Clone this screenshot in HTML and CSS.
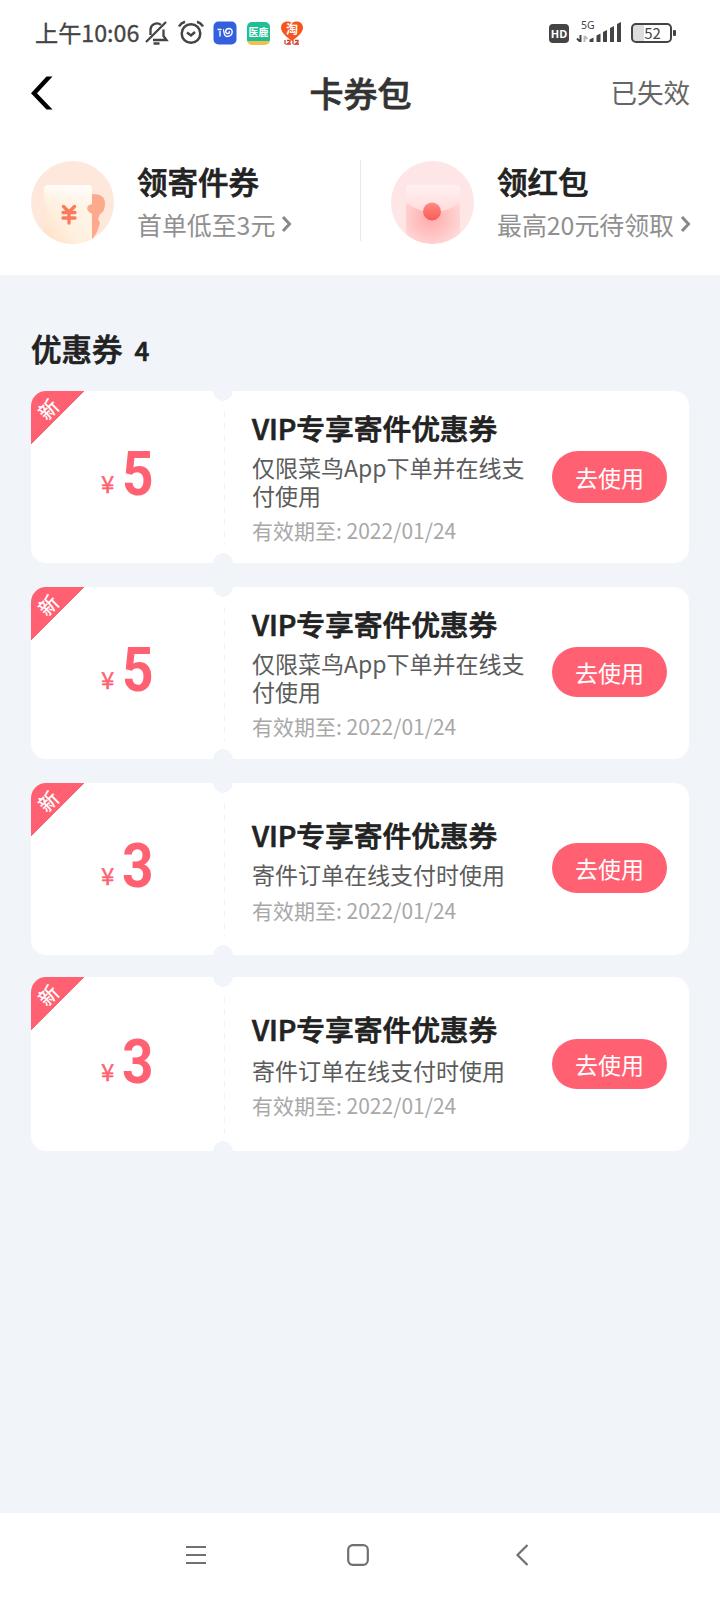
FILE: index.html
```html
<!DOCTYPE html>
<html lang="zh-CN">
<head>
<meta charset="utf-8">
<title>卡券包</title>
<link rel="stylesheet" href="styles.css">
</head>
<body>
<div class="screen">
  <header class="status">
    <span class="clock">上午10:06</span>
    <svg class="st-bell" width="24" height="26" viewBox="0 0 24 26" fill="none" stroke="#444" stroke-width="2.3"><path d="M8 20H21.500L18.500 16V9.500"/><path d="M16 4.800A6.500 6.500 0 0 0 5.500 9.500V15"/><path d="M1 22 21 2"/><path d="M8.500 23.500h6" stroke-width="2.500"/></svg>
    <svg class="st-alarm" width="26" height="26" viewBox="0 0 26 26" fill="none" stroke="#444" stroke-width="2.500"><circle cx="13" cy="13.500" r="9.300"/><path d="M9 12.500l4 3 4-3.500M1 6.500Q3 3 7 1.800M25 6.500Q23 3 19 1.800"/></svg>
    <svg class="st-app" width="24" height="24" viewBox="0 0 24 24"><rect x=".5" y=".5" width="23" height="23" rx="5" fill="#3560dd"/><path d="M4.500 8.500h4M7 10v5.500M10 8.500c1.500 0 0 7 4 7 6 0 7-7.500 2-8-4 0-4.500 5-1 5 1.500 0 1.800-1.500 1-2.300" fill="none" stroke="#fff" stroke-width="1.400"/></svg>
    <span class="st-green"><b>医鹿</b></span>
    <svg class="st-tao" width="24" height="24" viewBox="0 0 24 24"><path d="M12 20C7 16 1 12 1 6.500 1 0 9-1 12 2c3-3 11-2 11 4.500C23 12 17 16 12 20z" fill="#f4561d"/><text x="12" y="13" text-anchor="middle" class="tao-text">淘</text><path d="M5 19v4M7 19.500h3v1.500l-3 2h4M13 19v4M15 19.500h3v1.500l-3 2h4" stroke="#d43a2a" stroke-width="1.300" fill="none"/></svg>
    <span class="spacer"></span>
    <span class="hd">HD</span>
    <svg class="st-signal" width="46" height="32" viewBox="0 -3 46 32"><text x="4" y="8.500" class="g5">5G</text><path d="M3.500 15v7M0 18.500l3 3" stroke="#444" stroke-width="2" fill="none"/><path d="M7.500 22v-6M7.500 16l3 3" stroke="#bbb" stroke-width="2" fill="none"/><path d="M12.500 19.500l4-2V22h-4zM19.500 15.500l4-2V22h-4zM26 12l4-2v12h-4zM33 8l4-2v16h-4zM40 4l4-2v20h-4z" fill="#444"/></svg>
    <span class="battery">52</span>
  </header>
  <nav class="bar">
    <svg width="22" height="34" viewBox="0 0 22 34"><path d="M15.500.500H21.500L6 17.300 21.500 33.500H15.500L0 17.300z" fill="#000"/></svg>
    <h1>卡券包</h1>
    <a class="expired">已失效</a>
  </nav>
  <section class="promos">
    <div class="promo">
      <svg width="83" height="83" viewBox="0 0 83 83"><defs><linearGradient id="a" x1="1" y1="0" x2="0" y2="1"><stop offset="0" stop-color="#fff8ee"/><stop offset=".6" stop-color="#fef0df"/><stop offset="1" stop-color="#ffdec6"/></linearGradient><linearGradient id="t" x1="0" y1="0" x2="0" y2="1"><stop offset="0" stop-color="#fff" stop-opacity=".75"/><stop offset="1" stop-color="#fff" stop-opacity="0"/></linearGradient><clipPath id="c"><circle cx="41.500" cy="41.500" r="41.500"/></clipPath></defs><g clip-path="url(#c)"><rect width="83" height="83" fill="#fee7db"/><path d="M61 33q13 0 13 9 0 9-5 11l-2 5 2 4-3 9-5 8V53q-5-3-5-6t4-5z" fill="#fcaa8c"/><path d="M17 24h41q3 0 3 4v15q-5 1-5 5t5 5v30H13V53q3-2 3-5t-3-4V28q0-4 4-4z" fill="url(#a)"/><path d="M17 24h41q3 0 3 4v14H13V28q0-4 4-4z" fill="url(#t)"/></g><path d="M32.500 45.500l5.500 5.500 5.500-5.500M32 51.500h12M32 57h12M38 51v11" fill="none" stroke="#fa7a5a" stroke-width="3.300" stroke-linecap="round"/></svg>
      <div class="promo-text"><h2>领寄件券</h2><p>首单低至3元<svg class="chev" width="11" height="18" viewBox="0 0 11 18"><path d="M2 2l6.500 7L2 16" fill="none" stroke="#888" stroke-width="3"/></svg></p></div>
    </div>
    <div class="promo second">
      <svg width="83" height="83" viewBox="0 0 83 83"><defs><radialGradient id="r" gradientUnits="userSpaceOnUse" cx="40" cy="56" r="34"><stop offset="0" stop-color="#ffa9a8"/><stop offset="1" stop-color="#ffdcdc"/></radialGradient><linearGradient id="b" x1="0" y1="0" x2="0" y2="1"><stop offset="0" stop-color="#ff8c80"/><stop offset="1" stop-color="#f65c56"/></linearGradient><linearGradient id="f" x1="0" y1="0" x2="0" y2="1"><stop offset="0" stop-color="#fff0f0"/><stop offset="1" stop-color="#ffdcdb"/></linearGradient><clipPath id="d"><circle cx="41.500" cy="41.500" r="41.500"/></clipPath></defs><g clip-path="url(#d)"><rect width="83" height="83" fill="#fee5e6"/><rect x="15" y="25" width="54" height="60" rx="4" fill="url(#r)"/><path d="M19 24h46q4 0 4 4v14Q42 60 15 42V28q0-4 4-4z" fill="url(#f)"/></g><circle cx="41" cy="50.500" r="9" fill="url(#b)"/></svg>
      <div class="promo-text"><h2>领红包</h2><p>最高20元待领取<svg class="chev" width="11" height="18" viewBox="0 0 11 18"><path d="M2 2l6.500 7L2 16" fill="none" stroke="#888" stroke-width="3"/></svg></p></div>
    </div>
  </section>
  <main class="list">
    <h3>优惠券<span>4</span></h3>
    <article class="card">
      <i class="tag"><b>新</b></i>
      <div class="amount"><small>¥</small><strong>5</strong></div>
      <div class="info"><h4>VIP专享寄件优惠券</h4><p>仅限菜鸟App下单并在线支付使用</p><time>有效期至: 2022/01/24</time></div>
      <button>去使用</button>
    </article>
    <article class="card">
      <i class="tag"><b>新</b></i>
      <div class="amount"><small>¥</small><strong>5</strong></div>
      <div class="info"><h4>VIP专享寄件优惠券</h4><p>仅限菜鸟App下单并在线支付使用</p><time>有效期至: 2022/01/24</time></div>
      <button>去使用</button>
    </article>
    <article class="card short">
      <i class="tag"><b>新</b></i>
      <div class="amount"><small>¥</small><strong>3</strong></div>
      <div class="info"><h4>VIP专享寄件优惠券</h4><p>寄件订单在线支付时使用</p><time>有效期至: 2022/01/24</time></div>
      <button>去使用</button>
    </article>
    <article class="card short last">
      <i class="tag"><b>新</b></i>
      <div class="amount"><small>¥</small><strong>3</strong></div>
      <div class="info"><h4>VIP专享寄件优惠券</h4><p>寄件订单在线支付时使用</p><time>有效期至: 2022/01/24</time></div>
      <button>去使用</button>
    </article>
  </main>
  <footer class="keys">
    <svg width="22" height="22" viewBox="0 0 22 22" stroke="#707070" stroke-width="2.200"><path d="M1 3h20M1 11h20M1 19h20"/></svg>
    <svg width="22" height="22" viewBox="0 0 22 22"><rect x="1.200" y="1.200" width="19.600" height="19.600" rx="4.500" fill="none" stroke="#707070" stroke-width="2.200"/></svg>
    <svg width="22" height="22" viewBox="0 0 22 22" fill="none" stroke="#707070" stroke-width="2.200"><path d="M18.500 1 8.500 11l10 10"/></svg>
  </footer>
</div>
</body>
</html>
```
FILE: styles.css
```css
* { box-sizing: border-box; margin: 0; padding: 0; }
body { background: #fff; font-family: "Noto Sans CJK SC", sans-serif; color: #222; }
.screen { width: 720px; height: 1600px; display: flex; flex-direction: column; overflow: hidden; }
svg { display: block; flex: none; }

.status { height: 65px; flex: none; display: flex; align-items: center; padding: 1px 48px 0 35px; color: #444; }
.clock { font-size: 23.2px; line-height: 34px; font-weight: 400; width: 110px; margin-top: -3px; white-space: nowrap; -webkit-text-stroke: .3px #444; }
.st-alarm { margin-left: 9px; }
.st-app { margin-left: 9px; }
.st-green { width: 23px; height: 23px; margin-left: 10px; border-radius: 5px; background: linear-gradient(#1fbe94 0 84%, #e9c24f 84%); color: #fff; text-align: center; }
.st-green b { display: block; font-size: 10px; line-height: 19px; }
.st-tao { margin-left: 10px; }
.tao-text { font-size: 12px; font-weight: 700; fill: #fff; }
.spacer { flex: 1; }
.hd { width: 20px; height: 19px; border-radius: 4px; background: #444; color: #fff; font: 700 11px/19px "Noto Sans", sans-serif; text-align: center; }
.st-signal { margin-left: 8px; overflow: visible; }
.g5 { font: 400 10.500px "Noto Sans", sans-serif; fill: #444; }
.battery { position: relative; width: 41px; height: 20px; margin-left: 8px; border: 2.500px solid #444; border-radius: 5px; background: linear-gradient(90deg, #ddd 11px, #fff 11px); font: 400 15px/15px "Noto Sans CJK SC", sans-serif; text-align: center; padding-left: 2px; }
.battery::after { content: ""; position: absolute; right: -6px; top: 5px; width: 3px; height: 6px; background: #444; border-radius: 1px; }

.bar { height: 72px; flex: none; display: grid; grid-template-columns: 1fr auto 1fr; align-items: center; padding: 0 30px 16px 31px; }
.bar h1 { font-size: 34px; line-height: 50px; margin-top: -1px; font-weight: 500; color: #333; -webkit-text-stroke: .7px #333; }
.expired { justify-self: end; font-size: 26.5px; line-height: 40px; margin-top: -2px; color: #666; font-weight: 400; }

.promos { height: 138px; flex: none; display: grid; grid-template-columns: 360px 360px; }
.promo { display: flex; padding: 24px 0 0 31px; }
.second { background: linear-gradient(#e8e8e8, #e8e8e8) 0 23px / 1px 81px no-repeat; }
.promo-text { margin-left: 23px; }
.promo h2 { font-size: 30.5px; line-height: 44px; margin-top: -2px; font-weight: 500; -webkit-text-stroke: .7px #222; }
.promo p { font-size: 24.900px; line-height: 40px; margin-top: 1px; font-weight: 400; color: #909090; display: flex; align-items: center; white-space: nowrap; }
.chev { margin-left: 6px; }

.list { flex: 1; background: #f1f5fa; padding: 50px 31px 0; }
.list h3 { font-size: 30.5px; line-height: 46px; height: 66px; font-weight: 500; -webkit-text-stroke: .7px #222; }
.list h3 span { font-size: 26px; margin-left: 12px; }
.card { position: relative; height: 172px; margin-bottom: 24px; border-radius: 15px; display: flex; align-items: center; background: radial-gradient(circle at 192px 0, #f1f5fa 9.500px, transparent 10px), radial-gradient(circle at 192px 100%, #f1f5fa 9.500px, transparent 10px), #fff; }
.card:nth-of-type(3) { margin-bottom: 22px; }
.last { height: 174px; }
.card::before { content: ""; position: absolute; left: 193px; top: 20px; bottom: 18px; width: 1px; background: repeating-linear-gradient(#f0f1f4 0 6px, transparent 6px 12px); }
.tag { position: absolute; left: 0; top: 0; width: 53px; height: 53px; border-top-left-radius: 15px; background: linear-gradient(135deg, #ff6072 50%, transparent 50.500%); }
.tag b { display: block; width: 30px; height: 30px; margin: 3px 0 0 2px; font: 500 19.500px/30px "Noto Sans CJK SC", sans-serif; color: #fff; text-align: center; transform: rotate(-45deg); }
.amount { width: 192px; display: flex; align-items: baseline; padding: 0 0 7px 70px; color: #ff6072; }
.last .amount { padding-bottom: 4px; }
.amount small { font: 400 24px/30px "Noto Sans CJK SC", sans-serif; width: 21px; transform: translateY(-2px); -webkit-text-stroke: .4px #ff6072; }
.amount strong { font: 700 61px/70px Roboto, sans-serif; transform: scaleX(.9); transform-origin: left; }
.info { width: 278px; margin-left: 29px; padding-top: 2px; }
.info h4 { font-size: 28.800px; line-height: 42px; margin-top: -3px; font-weight: 500; white-space: nowrap; -webkit-text-stroke: .7px #222; letter-spacing: -.1px; }
.info p { font-size: 23px; line-height: 27.500px; font-weight: 400; color: #5c5c5c; padding: 5px 0 5px; }
.info time { display: block; font-size: 21px; line-height: 32px; font-weight: 400; color: #a8a8a8; white-space: nowrap; }
.short h4 { margin-top: 0; }
.last h4 { margin-top: -2px; }
.last p { padding-top: 7px; }
.last .info { padding-top: 3px; }
.card button { position: absolute; right: 22px; top: 60px; width: 115px; height: 50px; border: 0; border-radius: 26px; background: #ff6072; color: #fff; font: 400 23px/48px "Noto Sans CJK SC", sans-serif; }
.card:nth-of-type(1) button { height: 52px; }
.card.last button { top: 62px; }

.keys { height: 87px; flex: none; display: flex; align-items: center; padding: 0 0 4px 185px; gap: 140px; }
```
